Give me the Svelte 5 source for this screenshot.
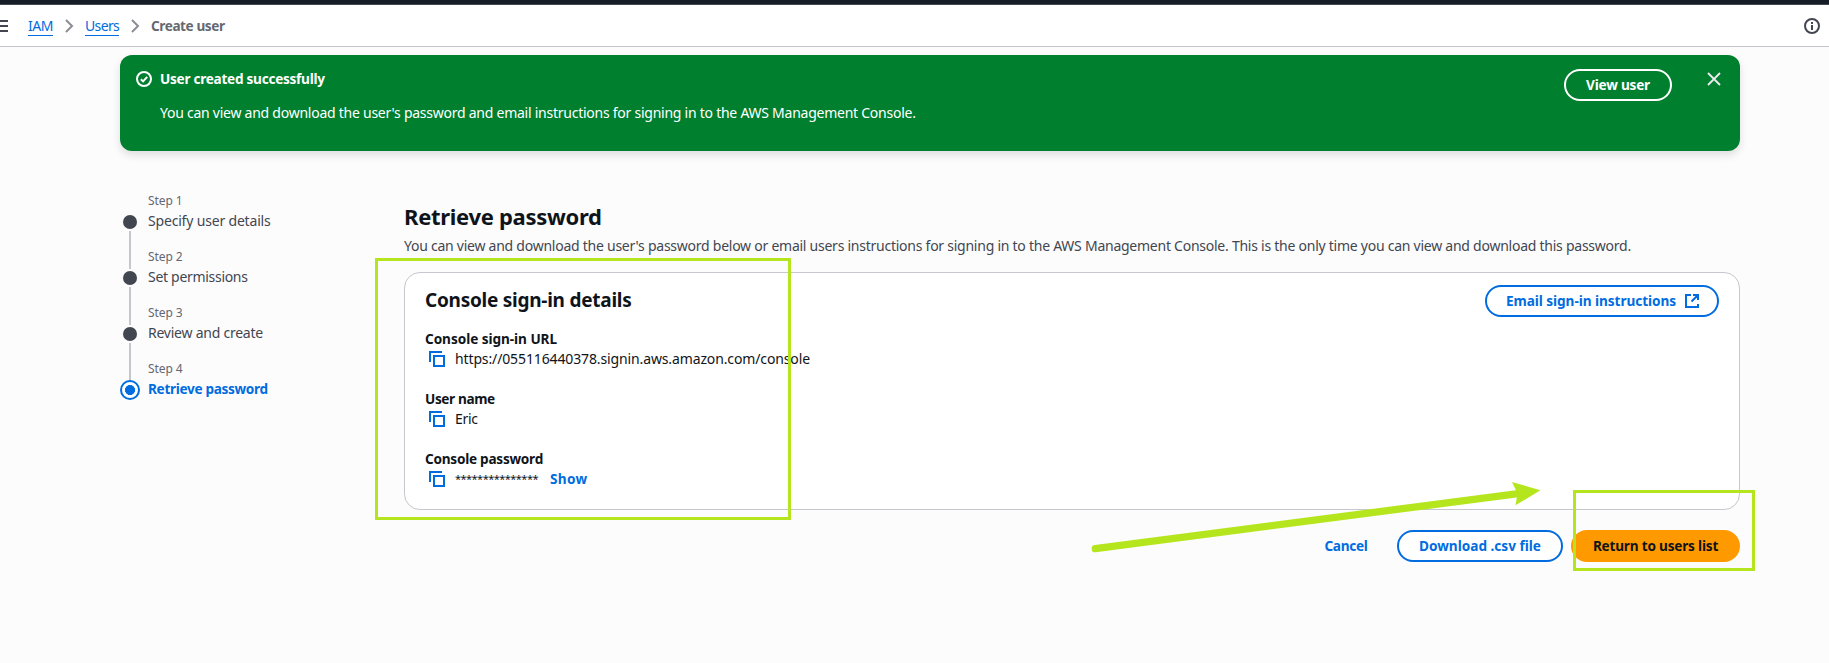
<script>
  const steps = ['Specify user details', 'Set permissions', 'Review and create', 'Retrieve password'];
  const tracking = ['-0.18px', '-0.3px', '-0.24px', '-0.32px'];
  const details = [
    { label: 'Console sign-in URL', value: 'https://055116440378.signin.aws.amazon.com/console', kind: 'url' },
    { label: 'User name', value: 'Eric', kind: 'name' },
    { label: 'Console password', value: '***************', kind: 'secret' }
  ];
</script>

{#snippet chevron()}
  <svg class="chevron" width="16" height="16" viewBox="0 0 16 16"><path d="M5 2l6 6-6 6" /></svg>
{/snippet}

<div class="page">
  <div class="topbar"></div>
  <header>
    <svg class="menu" width="8" height="16" viewBox="0 0 8 16"><path d="M0 3h8M0 8h8M0 13h8" /></svg>
    <nav>
      <a class="iam" href="#iam">IAM</a>
      {@render chevron()}
      <a class="users" href="#users">Users</a>
      {@render chevron()}
      <span class="current">Create user</span>
    </nav>
    <svg class="info" width="16" height="16" viewBox="0 0 16 16">
      <circle cx="8" cy="8" r="7" /><path d="M8 12V7M8 6V4" />
    </svg>
  </header>

  <section class="banner">
    <svg class="check" width="16" height="16" viewBox="0 0 16 16"><circle cx="8" cy="8" r="7" /><path d="M4.8 8.2l2.3 2.2 4.1-4.6" /></svg>
    <div class="message">
      <strong>User created successfully</strong>
      <p>You can view and download the user's password and email instructions for signing in to the AWS Management Console.</p>
    </div>
    <button class="btn view">View user</button>
    <svg class="close" width="16" height="16" viewBox="0 0 16 16"><path d="M2 2l12 12M14 2L2 14" /></svg>
  </section>

  <div class="body">
    <ol>
      {#each steps as step, i}
        <li class:active={i === 3}>
          <span class="rail">
            <span class="dot"></span>
            {#if i < 3}<span class="line"></span>{/if}
          </span>
          <span class="step">
            <small>Step {i + 1}</small>
            <span class="title" style="letter-spacing: {tracking[i]}">{step}</span>
          </span>
        </li>
      {/each}
    </ol>

    <main>
      <h1>Retrieve password</h1>
      <p class="desc">You can view and download the user's password below or email users instructions for signing in to the AWS Management Console. This is the only time you can view and download this password.</p>

      <section class="card">
        <div class="cardhead">
          <h2>Console sign-in details</h2>
          <button class="btn email">
            Email sign-in instructions
            <svg width="16" height="16" viewBox="0 0 16 16"><path d="M7 2H2v12h12v-3M9 2h5v5M14 2L7.5 8.5" /></svg>
          </button>
        </div>
        {#each details as d}
          <div class="field {d.kind}">
            <div class="label">{d.label}</div>
            <div class="value">
              <svg width="16" height="16" viewBox="0 0 16 16"><path d="M1 11V1h12M5 5h10v10H5z" /></svg>
              <span>{d.value}</span>
              {#if d.kind === 'secret'}<b>Show</b>{/if}
            </div>
          </div>
        {/each}
      </section>

      <footer>
        <button class="link">Cancel</button>
        <button class="btn csv">Download .csv file</button>
        <button class="btn primary">Return to users list</button>
      </footer>
    </main>
  </div>

  <div class="mark details-mark"></div>
  <div class="mark return-mark"></div>
  <svg class="arrow" width="460" height="80" viewBox="1085 475 460 80">
    <path class="shaft" d="M1095.3 548.7L1518 493.6" />
    <path class="head" d="M1540.5 490.3L1512 482L1517.5 493.5L1515.5 505.3z" />
  </svg>
</div>

<style>
  :global(body) { margin: 0; background: #fcfcfc; }
  .page { position: relative; height: 663px; overflow: hidden; background: #fcfcfc; color: #0f141a; font: 14px/20px "Noto Sans", "Open Sans", sans-serif; }
  svg { flex: none; fill: none; stroke: currentColor; stroke-width: 2; }
  button { font: inherit; cursor: pointer; margin: 0; }
  p, h1, h2, ol { margin: 0; padding: 0; }

  .topbar { height: 4px; background: #161d26; border-bottom: 1px solid #424650; }
  header { display: flex; align-items: center; box-sizing: border-box; height: 42px; padding-right: 9px; background: #fff; border-bottom: 1px solid #c6c6cd; color: #424650; }
  nav { display: flex; align-items: center; margin-left: 20px; }
  nav a { padding-top: 2px; color: #006ce0; text-decoration: none; line-height: 18px; border-bottom: 1px solid #006ce0; white-space: nowrap; }
  .iam { width: 25px; letter-spacing: -0.45px; }
  .users { width: 34px; letter-spacing: -0.65px; }
  .chevron { margin: 0 8px; color: #8c8c94; }
  .current { color: #656871; font-size: 13.6px; font-weight: 700; letter-spacing: -0.42px; }
  .info { margin-left: auto; }
  .menu, .chevron, .info, .current { margin-top: 1px; }

  .banner { display: flex; align-items: flex-start; box-sizing: border-box; width: 1620px; height: 96px; margin: 8px 0 0 120px; padding: 14px 18px 0 16px; border-radius: 12px; background: #00802f; color: #fff; box-shadow: 0 4px 8px rgba(0, 7, 22, 0.12); }
  .check { margin: 2px 8px 0 0; }
  .message { flex: 1; }
  .message strong { display: block; font-size: 13.6px; letter-spacing: -0.27px; }
  .message p { margin-top: 14px; letter-spacing: -0.25px; }
  .btn { display: flex; align-items: center; justify-content: center; box-sizing: border-box; height: 32px; padding: 0; border: 2px solid #006ce0; border-radius: 16px; background: #fff; color: #006ce0; font-size: 13.6px; font-weight: 700; white-space: nowrap; }
  .view { width: 108px; border-color: #fff; background: transparent; color: #fff; letter-spacing: -0.2px; }
  .close { margin: 2px 0 0 34px; color: #ebebf0; stroke-width: 1.8; }

  .body { display: flex; padding: 40px 89px 0 120px; }
  ol { width: 284px; list-style: none; }
  li { display: flex; height: 56px; }
  .rail { display: flex; flex-direction: column; align-items: center; width: 20px; padding-top: 24px; box-sizing: border-box; }
  .dot { flex: none; width: 14px; height: 14px; border-radius: 50%; background: #424650; }
  .line { flex: none; width: 2px; height: 38px; margin-top: 2px; background: #c6c6cd; }
  .step { display: flex; flex-direction: column; margin-left: 8px; color: #424650; }
  small { font-size: 12px; line-height: 20px; color: #656871; letter-spacing: -0.1px; }
  .title { line-height: 20px; }
  .active .rail { padding-top: 21px; }
  .active .dot { box-sizing: border-box; width: 20px; height: 20px; border: 2px solid #006ce0; background: radial-gradient(circle, #006ce0 0 4.7px, #fff 5.3px); }
  .active .title { color: #006ce0; font-size: 13.6px; font-weight: 700; }

  main { width: 1336px; padding-top: 9px; }
  h1 { font-size: 22px; line-height: 32px; letter-spacing: -0.3px; }
  .desc { margin-top: 4px; color: #424650; letter-spacing: -0.249px; white-space: nowrap; }
  .card { box-sizing: border-box; width: 1336px; height: 238px; margin-top: 16px; padding: 12px 20px 0; border: 1px solid #c6c6cd; border-radius: 16px; background: #fff; }
  .cardhead { display: flex; justify-content: space-between; height: 44px; }
  h2 { font-size: 19px; line-height: 30px; letter-spacing: -0.25px; }
  .email { width: 234px; gap: 8px; padding-left: 2px; letter-spacing: -0.05px; }
  .field { height: 60px; }
  .label { font-size: 13.6px; font-weight: 700; letter-spacing: -0.05px; }
  .name .label { letter-spacing: -0.37px; }
  .secret .label { letter-spacing: -0.25px; }
  .value { display: flex; align-items: center; height: 20px; }
  .value svg { margin: 0 10px 0 4px; color: #006ce0; }
  .url span { letter-spacing: -0.126px; }
  .name span { letter-spacing: -0.3px; }
  .secret span { font-size: 11px; letter-spacing: -0.53px; }
  .value b { margin-left: 12px; color: #006ce0; font-size: 13.6px; letter-spacing: 0.3px; }

  footer { display: flex; align-items: center; justify-content: flex-end; margin-top: 20px; }
  .link { width: 44px; margin-right: 29px; padding: 0; border: 0; background: none; color: #006ce0; font-size: 13.6px; font-weight: 700; letter-spacing: -0.28px; }
  .csv { width: 166px; margin-right: 8px; }
  .primary { width: 169px; border-color: #ff9900; background: #ff9900; color: #0f141a; letter-spacing: -0.2px; }

  .mark { position: absolute; box-sizing: border-box; border: 3px solid #b5e61d; }
  .details-mark { left: 375px; top: 258px; width: 416px; height: 262px; }
  .return-mark { left: 1573px; top: 490px; width: 182px; height: 81px; }
  .arrow { position: absolute; left: 1085px; top: 475px; }
  .shaft { stroke: #b5e61d; stroke-width: 7.3; stroke-linecap: round; }
  .head { fill: #b5e61d; stroke: none; }
</style>
